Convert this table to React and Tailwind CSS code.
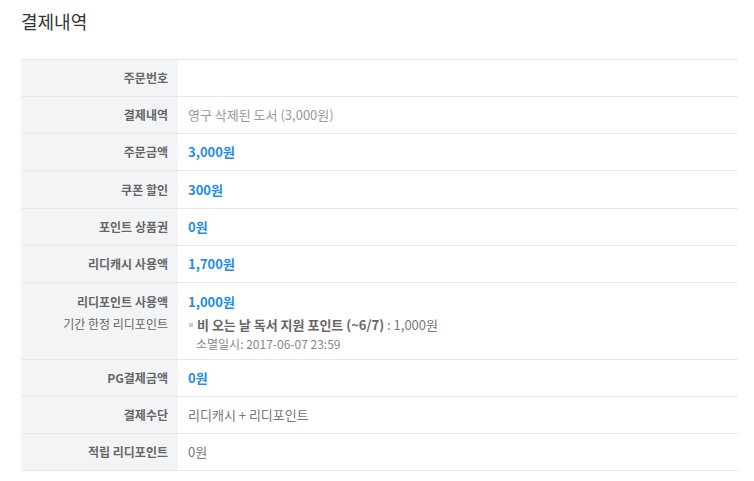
const rows = [
    { label: '주문번호', value: null },
    {
        label: '결제내역',
        value: (
            <span className="text-[#999]">
                영구 삭제된 도서 (3,000원)
            </span>
        ),
    },
    { label: '주문금액', value: <Blue>3,000원</Blue> },
    { label: '쿠폰 할인', value: <Blue>300원</Blue> },
    { label: '포인트 상품권', value: <Blue>0원</Blue> },
    { label: '리디캐시 사용액', value: <Blue>1,700원</Blue> },
];

const bottomRows = [
    { label: 'PG결제금액', value: <Blue>0원</Blue> },
    {
        label: '결제수단',
        value: (
            <span className="text-[#777]">
                리디캐시 + 리디포인트
            </span>
        ),
    },
    {
        label: '적립 리디포인트',
        value: <span className="text-[#777]">0원</span>,
    },
];

export default function App() {
    return (
        <div
            className="h-[481px] w-[754px] bg-white px-[21px] pt-[9px]"
            style={{
                fontFamily:
                    '"Noto Sans CJK KR", "Noto Sans", sans-serif',
            }}
        >
            <h2 className="text-[18px] leading-[24px] font-normal text-[#333]">
                결제내역
            </h2>

            <div className="mt-[26px] w-[717px] border-t border-[#e6e8eb]">
                {rows.map((row, index) => (
                    <Row
                        key={row.label}
                        label={row.label}
                        tall={index === 3}
                    >
                        {row.value}
                    </Row>
                ))}

                <div className="flex border-b border-[#e6e8eb]">
                    <div className="w-[157px] shrink-0 bg-[#f3f4f5] pr-[10px] pt-[9px] pb-[16px] text-right text-[12px] leading-[20px] text-[#666]">
                        <p className="font-bold">리디포인트 사용액</p>
                        <p className="mt-[2px]">기간 한정 리디포인트</p>
                    </div>

                    <div className="flex-1 pl-[10px] pt-[9px] pb-[6px] text-[13px] leading-[20px]">
                        <Blue>1,000원</Blue>
                        <p className="mt-[3px] flex items-center text-[#777]">
                            <span className="mr-[4px] ml-[1px] inline-block h-[4px] w-[4px] bg-[#ccc]" />
                            <span className="font-bold text-[#666]">
                                비 오는 날 독서 지원 포인트 (~6/7)
                            </span>
                            <span>&nbsp;: 1,000원</span>
                        </p>
                        <p className="pl-[8px] text-[12px] leading-[18px] text-[#888]">
                            소멸일시: 2017-06-07 23:59
                        </p>
                    </div>
                </div>

                {bottomRows.map((row) => (
                    <Row key={row.label} label={row.label}>
                        {row.value}
                    </Row>
                ))}
            </div>
        </div>
    );
}

function Row({ label, tall, children }) {
    return (
        <div
            className={`flex border-b border-[#e6e8eb] ${
                tall ? 'h-[38px]' : 'h-[37px]'
            }`}
        >
            <div className="flex w-[157px] shrink-0 items-center justify-end bg-[#f3f4f5] pr-[10px] text-[12px] font-bold text-[#666]">
                {label}
            </div>

            <div className="flex flex-1 items-center pl-[10px] text-[13px]">
                {children}
            </div>
        </div>
    );
}

function Blue({ children }) {
    return (
        <span className="font-bold text-[#1f8ce6]">
            {children}
        </span>
    );
}
